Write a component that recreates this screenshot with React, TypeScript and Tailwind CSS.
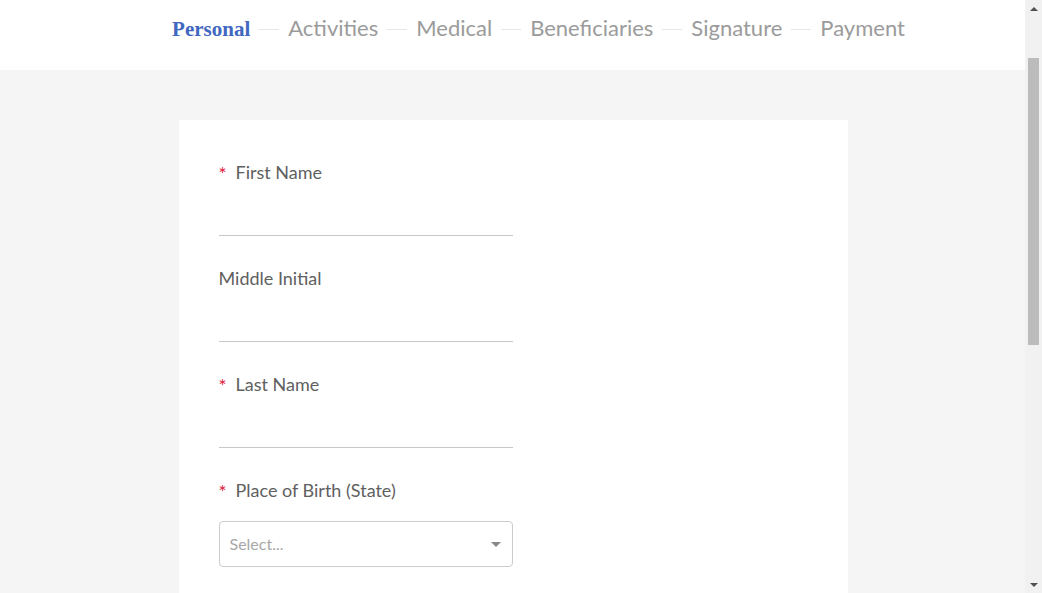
const steps = ["Personal", "Activities", "Medical", "Beneficiaries", "Signature", "Payment"];

function Label({ text, required }: { text: string; required?: boolean }) {
  return (
    <label className="flex items-center h-[22px] text-[18px] text-[#606060] leading-[22px]">
      {required && <span className="text-[#e0153b] w-[17px] text-[19px] leading-[22px] pt-[3px]">*</span>}
      {text}
    </label>
  );
}

function Field({ label, required }: { label: string; required?: boolean }) {
  return (
    <div className="h-[106px] flex flex-col">
      <Label text={label} required={required} />
      <input className="mt-[19px] w-[294px] h-[34px] border-b border-[#c8c8c8] outline-none bg-transparent" />
    </div>
  );
}

function Scrollbar() {
  return (
    <div className="w-[17px] shrink-0 bg-[#f1f1f1] flex flex-col items-center">
      <div className="h-[17px] flex items-center justify-center">
        <span className="w-0 h-0 border-l-[4px] border-r-[4px] border-b-[4px] border-l-transparent border-r-transparent border-b-[#505050]" />
      </div>
      <div className="mt-[41px] w-[11px] h-[287px] bg-[#bcbcbc]" />
      <div className="flex-1" />
      <div className="h-[17px] flex items-center justify-center">
        <span className="w-0 h-0 border-l-[4px] border-r-[4px] border-t-[4px] border-l-transparent border-r-transparent border-t-[#505050]" />
      </div>
    </div>
  );
}

export default function App() {
  return (
    <div className="h-screen flex overflow-hidden bg-[#f5f5f5]" style={{ fontFamily: "Lato, 'Open Sans', sans-serif" }}>
      <div className="flex-1 flex flex-col overflow-hidden">
        {/* Steps header */}
        <div className="h-[70px] shrink-0 bg-white flex justify-center">
          <div className="flex items-baseline pt-[13px] pl-[52px]">
            {steps.map((s, i) => (
              <div key={s} className="flex items-baseline">
                {i > 0 && <span className="mx-[9px] w-[20px] h-px bg-[#e6e6e6] self-center mt-[2px]" />}
                {i === 0 ? (
                  <span className="text-[21px] leading-[30px] font-bold text-[#4168c0]" style={{ fontFamily: "'Liberation Serif', serif" }}>
                    {s}
                  </span>
                ) : (
                  <span className="text-[22px] leading-[30px] text-[#9b9b9b]">{s}</span>
                )}
              </div>
            ))}
          </div>
        </div>

        <div className="pt-[50px] pl-[1px]">
          <div className="mx-auto w-[669px] bg-white px-[40px] pt-[41px] pb-[40px]">
            <Field label="First Name" required />
            <Field label="Middle Initial" />
            <Field label="Last Name" required />
            <div className="flex flex-col">
              <Label text="Place of Birth (State)" required />
              <div className="mt-[20px] w-[294px] h-[46px] border border-[#cccccc] rounded-[4px] flex items-center justify-between pl-[10px] pr-[11px]">
                <span className="text-[16px] text-[#a8a8a8]">Select...</span>
                <span className="w-0 h-0 border-l-[5px] border-r-[5px] border-t-[5px] border-l-transparent border-r-transparent border-t-[#888]" />
              </div>
            </div>
          </div>
        </div>
      </div>
      <Scrollbar />
    </div>
  );
}
